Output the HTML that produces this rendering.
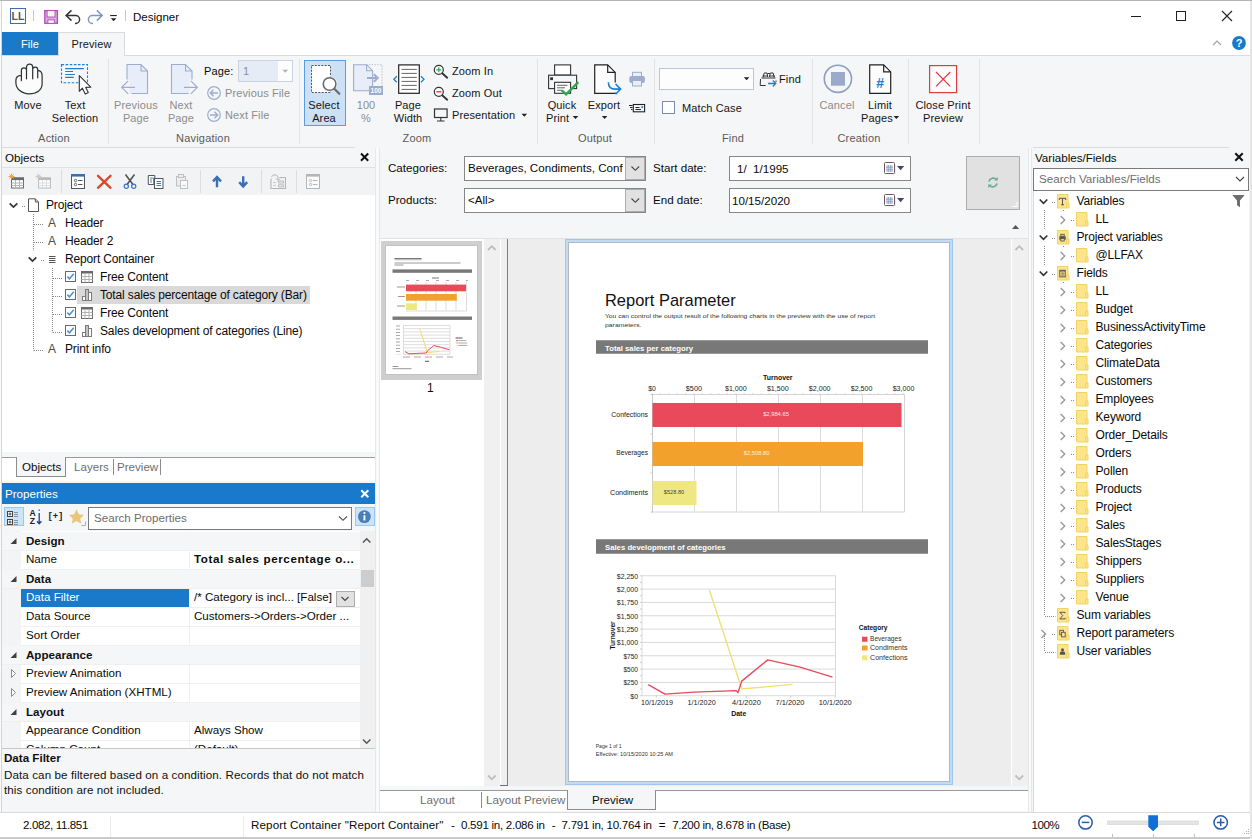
<!DOCTYPE html>
<html lang="en">
<head>
<meta charset="utf-8">
<title>Designer</title>
<style>
*{box-sizing:border-box;margin:0;padding:0}
html,body{width:1252px;height:839px;overflow:hidden;background:#fff}
body{position:relative;font-family:"Liberation Sans",sans-serif;font-size:12px;color:#0a0a0a;line-height:1}
.abs{position:absolute}
.t{position:absolute;white-space:nowrap;line-height:14px;height:14px}
.cx{transform:translateX(-50%)}
svg{position:absolute;overflow:visible}
/* edges */
#edgeL{left:0;top:0;width:2px;height:839px;background:linear-gradient(to right,#fbfbfb 0,#fbfbfb 1px,#d4d4d4 1px,#d4d4d4 2px)}
/* title bar */
#title{left:2px;top:1px;width:1250px;height:31px;background:#fff}
/* tabs */
#tabs{left:2px;top:32px;width:1250px;height:24px;background:#fff;border-bottom:1px solid #dadbdc}
#tabFile{left:0;top:0;width:56px;height:23px;background:#1979ca;color:#fff}
#tabPrev{left:56px;top:0;width:67px;height:24px;background:#f5f6f7;border:1px solid #dadbdc;border-bottom:none}
/* ribbon */
#ribbon{left:2px;top:56px;width:1250px;height:92px;background:#f5f6f7}
.sep{position:absolute;top:3px;width:1px;height:85px;background:#e2e3e4}
.rl{color:#151515;font-size:11px;letter-spacing:.12px}
.rd{color:#8d8d8d;font-size:11px;letter-spacing:.12px}
.rg{color:#5b5b5b;font-size:11px;letter-spacing:.2px}
/* panels */
#left{left:2px;top:147px;width:373px;height:665px;background:#f5f6f7}
#center{left:380px;top:147px;width:648px;height:665px;background:#f5f6f7}
#right{left:1032px;top:147px;width:220px;height:665px;background:#f5f6f7}
.splitv{background:#f9fafb;border-left:1px solid #e6e7e8;border-right:1px solid #e6e7e8}
.tree{font-size:12px;color:#0a0a0a;letter-spacing:-.15px}
.tree .t{line-height:18px;height:18px}
.g{position:absolute;left:19px;width:339px;height:19px;line-height:18px;white-space:nowrap;border-bottom:1px solid #f0f0f0;color:#0a0a0a}
.g.cat{left:0;width:358px;background:#f5f6f7;padding-left:24px;color:#111}
.g span{position:absolute;left:0;top:0;bottom:1px;width:168px;padding-left:5px;line-height:16px}
.g span.sel{background:#1979ca;color:#fff;bottom:0}
.g i{position:absolute;left:169px;top:0;bottom:1px;line-height:16px;width:170px;padding-left:4px;font-style:normal;overflow:hidden}
.pl{font-size:11.600px;color:#0a0a0a}
.inp{background:#fff;border:1px solid #868686}
.dd{position:absolute;right:0;top:0;width:20px;height:23px;background:#e1e1e1;border:1px solid #adadad}
.st{top:5px;font-size:11.600px;color:#0a0a0a}
/* status */
#status{left:0;top:812px;width:1252px;height:27px;background:#fff;border-top:1px solid #dadbdc}
</style>
</head>
<body>
<div id="edgeL" class="abs"></div>
<div class="abs" style="left:0;top:0;width:1252px;height:1px;background:#b5b5b5"></div>
<div class="abs" style="left:1250px;top:1px;width:2px;height:838px;background:#e6e6e6;z-index:5"></div>

<!-- TITLE BAR -->
<div id="title" class="abs">
  <div class="t" style="left:131px;top:9px;font-size:11.5px;color:#0a0a0a">Designer</div>
</div>

<!-- TAB ROW -->
<div id="tabs" class="abs">
  <div id="tabFile" class="abs"><div class="t rl" style="left:0;width:56px;top:5px;text-align:center;color:#fff">File</div></div>
  <div id="tabPrev" class="abs"><div class="t rl" style="left:0;width:65px;top:4px;text-align:center">Preview</div></div>
</div>

<!-- RIBBON -->
<div id="ribbon" class="abs">
  <div class="sep" style="left:106px"></div><div class="sep" style="left:297px"></div><div class="sep" style="left:535px"></div>
  <div class="sep" style="left:652px"></div><div class="sep" style="left:810px"></div><div class="sep" style="left:906px"></div><div class="sep" style="left:977px"></div>
</div>
<div id="rtext" class="abs" style="left:0;top:0;width:0;height:0">
  <div class="t rl cx" style="left:28px;top:98px">Move</div>
  <div class="t rl cx" style="left:75px;top:98px">Text</div>
  <div class="t rl cx" style="left:75px;top:111px">Selection</div>
  <div class="t rg cx" style="left:54px;top:131px">Action</div>
  <div class="t rd cx" style="left:136px;top:98px">Previous</div>
  <div class="t rd cx" style="left:136px;top:111px">Page</div>
  <div class="t rd cx" style="left:181px;top:98px">Next</div>
  <div class="t rd cx" style="left:181px;top:111px">Page</div>
  <div class="t rl" style="left:204px;top:64px;color:#0a0a0a">Page:</div>
  <div class="abs" style="left:238px;top:60px;width:55px;height:22px;border:1px solid #c9d3e2;background:#e6ecf5"><div class="abs" style="right:0;top:0;width:14px;height:20px;background:#fdfdfe"></div><div class="t rd" style="left:4px;top:3px">1</div></div>
  <div class="t rd" style="left:225px;top:86px">Previous File</div>
  <div class="t rd" style="left:225px;top:108px">Next File</div>
  <div class="t rg cx" style="left:203px;top:131px">Navigation</div>
  <div class="abs" style="left:304px;top:60px;width:42px;height:66px;background:#cce0f6;border:1px solid #5c9ce2"></div>
  <div class="t rl cx" style="left:324px;top:98px">Select</div>
  <div class="t rl cx" style="left:324px;top:111px">Area</div>
  <div class="t rd cx" style="left:366px;top:98px">100</div>
  <div class="t rd cx" style="left:366px;top:111px">%</div>
  <div class="t rl cx" style="left:408px;top:98px">Page</div>
  <div class="t rl cx" style="left:408px;top:111px">Width</div>
  <div class="t rl" style="left:452px;top:64px">Zoom In</div>
  <div class="t rl" style="left:452px;top:86px">Zoom Out</div>
  <div class="t rl" style="left:452px;top:108px">Presentation</div>
  <div class="t rg cx" style="left:417px;top:131px">Zoom</div>
  <div class="t rl cx" style="left:562px;top:98px">Quick</div>
  <div class="t rl" style="left:546px;top:111px">Print</div>
  <div class="t rl cx" style="left:604px;top:98px">Export</div>
  <div class="t rg cx" style="left:595px;top:131px">Output</div>
  <div class="abs" style="left:659px;top:68px;width:95px;height:22px;border:1px solid #b6c6dd;background:#fdfdfe"></div>
  <div class="t rl" style="left:779px;top:72px">Find</div>
  <div class="abs" style="left:662px;top:101px;width:13px;height:13px;border:1px solid #7d8ba8;background:#fff"></div>
  <div class="t rl" style="left:682px;top:101px">Match Case</div>
  <div class="t rg cx" style="left:733px;top:131px">Find</div>
  <div class="t rd cx" style="left:837px;top:98px">Cancel</div>
  <div class="t rl cx" style="left:880px;top:98px">Limit</div>
  <div class="t rl" style="left:861px;top:111px">Pages</div>
  <div class="t rg cx" style="left:859px;top:131px">Creation</div>
  <div class="t rl cx" style="left:943px;top:98px">Close Print</div>
  <div class="t rl cx" style="left:943px;top:111px">Preview</div>
</div>
<svg id="ricons" style="left:0;top:0" width="1252" height="147" viewBox="0 0 1252 147" fill="none">
  <!-- title bar icons -->
  <rect x="10.5" y="8.5" width="15" height="15" fill="#fff" stroke="#3c6eb4" stroke-width="1"/>
  <text x="18" y="20.200" style="font-family:'Liberation Sans',sans-serif;font-size:10.500px;font-weight:700" fill="#555" text-anchor="middle">LL</text>
  <rect x="33" y="10" width="1" height="11" fill="#c8c8c8"/>
  <rect x="44.800" y="10.600" width="12.600" height="12.700" fill="#dda9e1" stroke="#b44ab8" stroke-width="1.300"/>
  <rect x="47.100" y="10.600" width="7.900" height="6.400" fill="#f6f6f6" stroke="#b44ab8" stroke-width=".9"/>
  <rect x="47.900" y="19.900" width="6.400" height="3.400" fill="#fff" stroke="#b44ab8" stroke-width=".9"/>
  <path d="M71.500 10.400 L66.100 15.500 L71.500 20.600 M66.300 15.500 H75.600 a4 4 0 0 1 0 8 H75" stroke="#333" stroke-width="1.500"/>
  <path d="M96.800 10.400 L102.200 15.500 L96.800 20.600 M102 15.500 H92.400 a4 4 0 0 0 0 8 H93" stroke="#7e97c0" stroke-width="1.500"/>
  <rect x="110.200" y="15" width="6.600" height="1.100" fill="#222"/><path d="M110.800 18.200 h5.600 l-2.800 3 z" fill="#222"/>
  <rect x="125" y="10" width="1" height="11" fill="#c8c8c8"/>
  <!-- window controls -->
  <path d="M1131 16.500 h10" stroke="#222" stroke-width="1"/>
  <rect x="1176.5" y="11.500" width="9" height="9" stroke="#222" stroke-width="1"/>
  <path d="M1222 11 l10 10 M1232 11 l-10 10" stroke="#222" stroke-width="1.1"/>
  <path d="M1213 45 l4 -4 l4 4" stroke="#a0a0a0" stroke-width="1.1"/>
  <circle cx="1239" cy="43" r="6.900" fill="#1979ca"/>
  <text x="1239" y="47" font-family="Liberation Sans, sans-serif" font-size="11" font-weight="700" fill="#fff" text-anchor="middle">?</text>
  <!-- Move hand -->
  <path d="M21.400 75.300 V70.300 a2.550 2.550 0 0 1 5.100 0 V67.200 a3.100 3.100 0 0 1 6.200 0 V69.500 a2.500 2.500 0 0 1 5 0 V70.300 C40.500 70.500 42.100 72.500 42.100 75.500 V84 C42.100 90 36.600 93.800 29.100 93.800 C21.600 93.800 15.900 88.800 15.900 82.800 V80.300 C15.900 77.300 18.300 75.400 21.400 75.300 Z" fill="#fcfcfc"/>
  <path d="M21.400 80.600 V70.300 a2.550 2.550 0 0 1 5.100 0 M26.500 78.800 V67.200 a3.100 3.100 0 0 1 6.200 0 V78.800 M32.700 69.500 a2.500 2.500 0 0 1 5 0 V77.800 M37.700 70.300 C40.500 70.500 42.100 72.500 42.100 75.500 V84 C42.100 90 36.600 93.800 29.100 93.800 C21.600 93.800 15.900 88.800 15.900 82.800 V80.300 C15.900 77.300 18.300 75.400 21.400 75.300" stroke="#333" stroke-width="1.250" stroke-linecap="round" stroke-linejoin="round"/>
  <!-- Text selection -->
  <rect x="61.500" y="64.600" width="26" height="18.200" stroke="#1e80d2" stroke-width="1.100" stroke-dasharray="2.600 1.500"/>
  <path d="M65.200 68.600 H83.800 M65.200 71.500 H73 M65.200 74.500 H74.900 M65.200 77.400 H73.800" stroke="#1e80d2" stroke-width="1.100"/>
  <path d="M79.300 75.700 V91.300 l3.100 -3.100 l2.900 5.700 l3 -1.500 l-2.600 -5 l5.100 -.3 Z" fill="#fff" stroke="#333" stroke-width="1.100" stroke-linejoin="round"/>
  <!-- Previous page (disabled) -->
  <path d="M127 64.500 h14 l6.500 6.500 v22.500 h-20.500 z" fill="#e8eef9"/>
  <path d="M119 80 h10.500 v14.500 h-10.500 z" fill="#f5f6f7"/>
  <path d="M127 79.500 v-15 h14 l6.500 6.500 v22.500 h-16" stroke="#9dadcd" stroke-width="1.100"/>
  <path d="M141 64.500 v6.500 h6.500" stroke="#9dadcd" stroke-width="1.100"/>
  <path d="M135 87.300 h-13.300 M128.200 80.800 l-6.500 6.500 l6.500 6.500" stroke="#9dadcd" stroke-width="1.200"/>
  <!-- Next page (disabled) -->
  <path d="M171.500 64.500 h14 l6.500 6.500 v22.500 h-20.500 z" fill="#e8eef9"/>
  <path d="M189.500 80 h9 v14.500 h-9 z" fill="#f5f6f7"/>
  <path d="M188.500 93.500 h-17 v-29 h14 l6.500 6.500 v8.500" stroke="#9dadcd" stroke-width="1.100"/>
  <path d="M185.500 64.500 v6.500 h6.500" stroke="#9dadcd" stroke-width="1.100"/>
  <path d="M184 87.300 h13.300 M190.800 80.800 l6.500 6.500 l-6.500 6.500" stroke="#9dadcd" stroke-width="1.200"/>
  <path d="M282.500 69.800 h5.600 l-2.800 3 z" fill="#b0b0b0"/>
  <!-- prev / next file -->
  <circle cx="214" cy="93" r="6.300" stroke="#9dadcd" stroke-width="1.200"/>
  <path d="M218 93 h-7.500 M213.500 89.800 l-3.200 3.200 l3.200 3.200" stroke="#9dadcd" stroke-width="1.400"/>
  <circle cx="214" cy="115" r="6.300" stroke="#9dadcd" stroke-width="1.200"/>
  <path d="M210 115 h7.500 M214.500 111.800 l3.200 3.200 l-3.200 3.200" stroke="#9dadcd" stroke-width="1.400"/>
  <!-- Select area -->
  <rect x="311.500" y="65.500" width="19" height="27" fill="#fff" stroke="#555" stroke-width="1" stroke-dasharray="2 1.300"/>
  <circle cx="329.600" cy="84" r="7.800" fill="#e4eefb"/>
  <circle cx="329.600" cy="84" r="6.300" fill="#fff" stroke="#6a6a6a" stroke-width="1.500"/>
  <path d="M334.300 88.800 l5 5" stroke="#6a6a6a" stroke-width="2.200" stroke-linecap="round"/>
  <!-- 100% (disabled) -->
  <path d="M366 64.700 h16 v22" stroke="#b5c2dc" stroke-width="1" stroke-dasharray="1.500 1.300"/>
  <path d="M353.600 64.700 h13 l6 6 v20 h-19 z" fill="#e8eef9" stroke="#9dadcd" stroke-width="1.100"/>
  <path d="M366.600 64.700 v6 h6" stroke="#9dadcd" stroke-width="1.100"/>
  <path d="M367 78 h9 M373.800 74.300 l4 3.700 l-4 3.700" stroke="#9dadcd" stroke-width="2"/>
  <rect x="369" y="86" width="14" height="9" fill="#9dadcd"/>
  <text x="376" y="93.200" font-family="Liberation Sans, sans-serif" font-size="6.500" font-weight="700" fill="#fff" text-anchor="middle">100</text>
  <!-- Page width -->
  <rect x="398.700" y="64.900" width="20.600" height="28.400" fill="#fff" stroke="#222" stroke-width="1.200"/>
  <path d="M401.500 69.400 h15.300 M401.500 73.400 h15.300 M401.500 77.400 h15.300 M401.500 81.400 h15.300 M401.500 85.400 h15.300 M401.500 89.400 h15.300" stroke="#666" stroke-width="1"/>
  <path d="M396.800 76.300 l-3 3 l3 3 M421 76.300 l3 3 l-3 3" stroke="#1e80d2" stroke-width="1.300"/>
  <!-- zoom in -->
  <circle cx="438.800" cy="69.800" r="4.500" fill="#fff" stroke="#333" stroke-width="1.200"/>
  <path d="M442.200 73.300 l5 4.400" stroke="#333" stroke-width="1.900" stroke-linecap="round"/>
  <path d="M436.300 69.800 h5 M438.800 67.300 v5" stroke="#2ea84f" stroke-width="1.200"/>
  <!-- zoom out -->
  <circle cx="438.800" cy="91.800" r="4.500" fill="#fff" stroke="#333" stroke-width="1.200"/>
  <path d="M442.200 95.300 l5 4.400" stroke="#333" stroke-width="1.900" stroke-linecap="round"/>
  <path d="M436.300 91.800 h5" stroke="#e03030" stroke-width="1.300"/>
  <!-- presentation -->
  <rect x="434.500" y="109" width="12.600" height="8.500" stroke="#333" stroke-width="1.200"/>
  <path d="M440.800 117.500 v3.500 M437 121 h7.500" stroke="#333" stroke-width="1.100"/>
  <path d="M521.500 113.800 h5.600 l-2.800 3 z" fill="#222"/>
  <!-- quick print -->
  <rect x="554.600" y="64.900" width="16" height="10.200" fill="#fff" stroke="#333" stroke-width="1.100"/>
  <rect x="548.600" y="75.200" width="28" height="13.400" fill="#f5f6f7" stroke="#333" stroke-width="1.100"/>
  <rect x="550.200" y="77.300" width="2.800" height="2.800" fill="#333"/>
  <rect x="554.600" y="82.300" width="16" height="11" fill="#fff" stroke="#333" stroke-width="1.100"/>
  <path d="M557 85.300 h10.500 M557 87.800 h8 M557 90.300 h5" stroke="#555" stroke-width=".9"/>
  <path d="M561.800 90.300 l4.300 4 l12.200 -12.200" stroke="#2ea84f" stroke-width="2.400"/>
  <path d="M572.700 116 h5.600 l-2.800 3 z" fill="#222"/>
  <!-- export -->
  <path d="M594.700 64.900 h13 l7.500 7.500 v20.900 h-20.500 z" fill="#fdfdfd" stroke="#222" stroke-width="1.200"/>
  <path d="M607.700 64.900 v7.500 h7.500" stroke="#222" stroke-width="1.200"/>
  <path d="M613.500 82.500 h8 v10 h-8z" fill="#f5f6f7" stroke="none"/>
  <path d="M608.400 82.300 c0 4.600 2.600 6.800 6.800 6.800 h5.200 M615.600 84 l5 5.100 l-5 5.100" stroke="#1e80d2" stroke-width="1.600"/>
  <path d="M601.800 116 h5.600 l-2.800 3 z" fill="#222"/>
  <!-- small printer disabled -->
  <rect x="632.500" y="72.300" width="9" height="4.500" fill="#e8eef9" stroke="#9dadcd" stroke-width="1"/>
  <rect x="629.300" y="76" width="15.600" height="7" rx="2" fill="#9dadcd"/>
  <rect x="632.500" y="80.500" width="9" height="5.500" fill="#e8eef9" stroke="#9dadcd" stroke-width="1"/>
  <!-- envelope / mail -->
  <rect x="633.300" y="104.500" width="11.300" height="7.300" stroke="#222" stroke-width="1.100"/>
  <path d="M629 105.500 h3.500 M630 107.500 h2.500 M631 109.500 h1.500 M635.500 107.500 h4 M635.500 109.500 h5.500" stroke="#222" stroke-width="1"/>
  <rect x="641.300" y="106.200" width="1.800" height="1.800" fill="#1e80d2"/>
  <!-- find combo arrow -->
  <path d="M743.800 77.300 h5.600 l-2.800 3 z" fill="#222"/>
  <!-- binoculars -->
  <path d="M763 77.500 l1.200 -4.500 h2.800 l.8 4 M769.500 77 l.8 -4 h2.800 l1.200 4.500 M761.500 78 h14 M760.500 79 l-.3 6.500 h5.500 M762.500 76 h5.500 M769.500 76 h5.500 M767.500 73.500 h2.500" stroke="#333" stroke-width="1"/>
  <path d="M776 80.500 v1.500" stroke="#333" stroke-width="1"/>
  <path d="M768 83.500 h7.500 M772.800 80.500 l3 3 l-3 3" stroke="#1e80d2" stroke-width="1.300"/>
  <!-- cancel -->
  <circle cx="837.900" cy="78.800" r="13.600" stroke="#8f9fc2" stroke-width="1.600"/>
  <rect x="831" y="72" width="14" height="13.700" fill="#9baacb"/>
  <!-- limit pages -->
  <path d="M869.700 64.900 h14 l7 7 v21.400 h-21 z" fill="#fdfdfd" stroke="#222" stroke-width="1.200"/>
  <path d="M883.700 64.900 v7 h7" stroke="#222" stroke-width="1.200"/>
  <text x="880.200" y="88" font-family="Liberation Sans, sans-serif" font-size="14" font-weight="700" fill="#1e80d2" text-anchor="middle">#</text>
  <path d="M893.600 116 h5.600 l-2.800 3 z" fill="#222"/>
  <!-- close print preview -->
  <rect x="929.600" y="65.600" width="27" height="27" fill="#fdfdfd" stroke="#e23a44" stroke-width="1.200"/>
  <path d="M936 72 l14.300 14.300 M950.300 72 l-14.300 14.300" stroke="#e23a44" stroke-width="1.200"/>
</svg>

<!-- LEFT PANEL -->
<div id="left" class="abs">
  <!-- Objects header -->
  <div class="abs" style="left:0;top:0;width:353px;height:1px;background:#dadbdc"></div>
  <div class="abs" style="left:0;top:20px;width:373px;height:1px;background:#e1e2e3"></div>
  <div class="abs" style="left:0;top:21px;width:373px;height:27px;background:#f2f3f4"></div>
  <div class="t" style="left:3px;top:4px;font-size:11.600px;color:#0a0a0a">Objects</div>
  <!-- tree -->
  <div class="abs" style="left:0;top:48px;width:373px;height:257px;background:#fff"></div>
  <div class="abs" style="left:75px;top:139px;width:233px;height:18px;background:#d9d9d9"></div>
  <div class="tree abs" style="left:0;top:49px">
    <div class="t" style="left:44px;top:0">Project</div>
    <div class="t" style="left:63px;top:18px">Header</div>
    <div class="t" style="left:63px;top:36px">Header 2</div>
    <div class="t" style="left:63px;top:54px">Report Container</div>
    <div class="t" style="left:98px;top:72px">Free Content</div>
    <div class="t" style="left:98px;top:90px">Total sales percentage of category (Bar)</div>
    <div class="t" style="left:98px;top:108px">Free Content</div>
    <div class="t" style="left:98px;top:126px">Sales development of categories (Line)</div>
    <div class="t" style="left:63px;top:144px">Print info</div>
    <div class="t" style="left:46px;top:18px;color:#4a4a4a;font-size:12px">A</div>
    <div class="t" style="left:46px;top:36px;color:#4a4a4a;font-size:12px">A</div>
    <div class="t" style="left:46px;top:144px;color:#4a4a4a;font-size:12px">A</div>
  </div>
  <!-- tabs strip -->
  <div class="abs" style="left:0;top:310px;width:373px;height:24px;background:#fff;border-top:1px solid #9a9a9a"></div>
  <div class="abs" style="left:14px;top:310px;width:50px;height:20px;background:#f5f6f7;border:1px solid #8c8c8c;border-top:none"></div>
  <div class="t" style="left:20px;top:313px;font-size:11.600px;color:#0a0a0a">Objects</div>
  <div class="t" style="left:72px;top:313px;font-size:11.600px;color:#6e6e6e">Layers</div>
  <div class="abs" style="left:111px;top:312px;width:1px;height:16px;background:#8c8c8c"></div>
  <div class="t" style="left:115px;top:313px;font-size:11.600px;color:#6e6e6e">Preview</div>
  <div class="abs" style="left:158px;top:312px;width:1px;height:16px;background:#8c8c8c"></div>
  <!-- Properties header -->
  <div class="abs" style="left:0;top:336px;width:373px;height:21px;background:#1979ca"></div>
  <div class="t" style="left:3px;top:340px;font-size:11.600px;color:#fff">Properties</div>
  <!-- properties toolbar -->
  <div class="abs" style="left:2px;top:360px;width:20px;height:19px;background:#cce4f7;border:1px solid #99c9ef"></div>
  <div class="abs" style="left:86px;top:360px;width:264px;height:23px;background:#fff;border:1px solid #7a7a7a"></div>
  <div class="t" style="left:92px;top:364px;font-size:11.600px;color:#6d6d6d">Search Properties</div>
  <div class="abs" style="left:353px;top:360px;width:20px;height:19px;background:#cce4f7;border:1px solid #99c9ef"></div>
  <!-- grid -->
  <div id="grid" class="abs" style="left:0;top:384px;width:358px;height:217px;background:#fff;overflow:hidden;font-size:11.600px">
    <div class="abs" style="left:0;top:0;width:19px;height:217px;background:#f3f4f5"></div>
    <div class="abs" style="left:187px;top:0;width:1px;height:217px;background:#f0f0f0"></div>
    <div class="g cat" style="top:1px"><b>Design</b></div>
    <div class="g" style="top:20px"><span>Name</span><i><b style="letter-spacing:.6px">Total sales percentage o...</b></i></div>
    <div class="g cat" style="top:39px"><b>Data</b></div>
    <div class="g" style="top:58px"><span class="sel">Data Filter</span><i>/* Category is incl... [False]</i></div>
    <div class="g" style="top:77px"><span>Data Source</span><i>Customers-&gt;Orders-&gt;Order ...</i></div>
    <div class="g" style="top:96px"><span>Sort Order</span><i></i></div>
    <div class="g cat" style="top:115px"><b>Appearance</b></div>
    <div class="g" style="top:134px"><span>Preview Animation</span><i></i></div>
    <div class="g" style="top:153px"><span>Preview Animation (XHTML)</span><i></i></div>
    <div class="g cat" style="top:172px"><b>Layout</b></div>
    <div class="g" style="top:191px"><span>Appearance Condition</span><i>Always Show</i></div>
    <div class="g" style="top:210px"><span>Column Count</span><i>(Default)</i></div>
    <div class="abs" style="left:334px;top:60px;width:19px;height:16px;background:#e1e1e1;border:1px solid #adadad"></div>
  </div>
  <!-- grid scrollbar -->
  <div class="abs" style="left:358px;top:384px;width:15px;height:217px;background:#f0f0f0"></div>
  <div class="abs" style="left:359px;top:423px;width:13px;height:17px;background:#cdcdcd"></div>
  <!-- description -->
  <div class="abs" style="left:0;top:601px;width:373px;height:1px;background:#c8c8c8"></div>
  <div class="t" style="left:2px;top:604px;font-size:11.600px;font-weight:700;color:#111">Data Filter</div>
  <div class="t" style="left:2px;top:621px;font-size:11.600px;color:#111;letter-spacing:.1px">Data can be filtered based on a condition. Records that do not match</div>
  <div class="t" style="left:2px;top:636px;font-size:11.600px;color:#111;letter-spacing:.1px">this condition are not included.</div>
</div>
<div class="abs splitv" style="left:375px;top:148px;width:5px;height:664px"></div>

<svg id="licons" style="left:0;top:0" width="380" height="839" viewBox="0 0 380 839" fill="none">
<path d="M361 153.500 l7.200 7.200 M368.200 153.500 l-7.200 7.200" stroke="#111" stroke-width="2"/>
<rect x="11.5" y="178.0" width="12" height="10" fill="#fff" stroke="#6a6a6a" stroke-width="1"/><rect x="11" y="177.5" width="13" height="2.600" fill="#6a6a6a"/><path d="M15.5 180.0 v8 M19.5 180.0 v8 M11.5 183.0 h12 M11.5 185.5 h12" stroke="#b4b4b4" stroke-width="1"/><path d="M11.5 173.5 v6 M8.5 176.5 h6 M9.4 174.4 l4.200 4.200 M13.6 174.4 l-4.200 4.200" stroke="#f0a030" stroke-width=".9"/>
<rect x="38.5" y="178.0" width="12" height="10" fill="#fff" stroke="#b9b9b9" stroke-width="1"/><rect x="38" y="177.5" width="13" height="2.600" fill="#b9b9b9"/><path d="M42.5 180.0 v8 M46.5 180.0 v8 M38.5 183.0 h12 M38.5 185.5 h12" stroke="#dcdcdc" stroke-width="1"/><path d="M38.5 173.5 v6 M35.5 176.5 h6 M36.4 174.4 l4.200 4.200 M40.6 174.4 l-4.200 4.200" stroke="#c9c9c9" stroke-width=".9"/>
<rect x="61" y="170" width="1" height="23" fill="#dcdddf"/>
<rect x="71.500" y="174.500" width="13" height="14" fill="#fff" stroke="#555" stroke-width="1"/><rect x="71" y="174" width="14" height="2.600" fill="#3a6fb5"/><circle cx="75.500" cy="180.500" r="1.200" stroke="#555" stroke-width=".9"/><circle cx="75.500" cy="184.500" r="1.200" stroke="#555" stroke-width=".9"/><path d="M78 180.500 h4.500 M78 184.500 h4.500" stroke="#555" stroke-width="1"/>
<path d="M98 175.800 l12.500 12 M110.500 175.800 l-12.500 12" stroke="#d8482c" stroke-width="2.300" stroke-linecap="round"/>
<path d="M125.500 174.500 l7.800 10.500 M134.500 174.500 l-7.800 10.500" stroke="#555" stroke-width="1.600"/><circle cx="126.300" cy="186.300" r="2.100" stroke="#3a78c8" stroke-width="1.200"/><circle cx="133.700" cy="186.300" r="2.100" stroke="#3a78c8" stroke-width="1.200"/>
<path d="M148.300 175.500 h6.500 v2.500 h-1 v6.500 h-5.500 z" fill="#fff" stroke="#555" stroke-width="1"/><path d="M150 178 h3 M150 180 h2 M150 182 h2" stroke="#3a78c8" stroke-width=".9"/><rect x="154.500" y="178.500" width="8.500" height="10" fill="#fff" stroke="#555" stroke-width="1"/><path d="M156.500 181.500 h4.500 M156.500 183.500 h4.500 M156.500 185.500 h4.500" stroke="#3a78c8" stroke-width="1"/>
<rect x="176.500" y="176.500" width="9" height="9.500" fill="#ececec" stroke="#c0c0c0"/><rect x="178.500" y="174.500" width="5" height="3" fill="#ececec" stroke="#c0c0c0"/><rect x="180.500" y="180.500" width="7" height="8" fill="#fafafa" stroke="#c0c0c0"/><path d="M182.500 185.500 h3" stroke="#c0c0c0"/>
<rect x="200" y="170" width="1" height="23" fill="#dcdddf"/>
<path d="M217 187.200 v-9.500 M213 181.300 l4 -4.200 l4 4.200" stroke="#3a6fb5" stroke-width="2.400"/>
<path d="M243.200 176.300 v9.500 M239.200 182.200 l4 4.200 l4 -4.200" stroke="#3a6fb5" stroke-width="2.400"/>
<rect x="261" y="170" width="1" height="23" fill="#dcdddf"/>
<path d="M271 178.500 v10 h14.500 v-11 h-6" stroke="#b5b5b5" stroke-width="1.100"/><path d="M271.500 177 a3.500 3.500 0 0 1 6.500 0 v3 M276 178.500 l2 2 l2 -2" stroke="#b5b5b5" stroke-width="1"/><path d="M273.500 182.500 h2 M273.500 185.500 h2 M278.500 181 h5 v2 h-5z M278.500 184.800 h5 v2 h-5z" stroke="#b5b5b5" stroke-width=".9"/>
<rect x="296" y="170" width="1" height="23" fill="#dcdddf"/>
<rect x="306.500" y="174.500" width="13" height="14" fill="#fbfbfb" stroke="#b5b5b5" stroke-width="1"/><rect x="306" y="174" width="14" height="2.600" fill="#b5b5b5"/><circle cx="310.500" cy="180.500" r="1.200" stroke="#b5b5b5" stroke-width=".9"/><circle cx="310.500" cy="184.500" r="1.200" stroke="#b5b5b5" stroke-width=".9"/><path d="M313 180.500 h4.500 M313 184.500 h4.500" stroke="#b5b5b5" stroke-width="1"/>
<path d="M33.500 214 v36.500 M33.500 268 v82.500 M52.500 268 v64.500" stroke="#8a8a8a" stroke-width="1" stroke-dasharray="1 1"/>
<path d="M22 206.500 h4 M41 260.500 h4" stroke="#8a8a8a" stroke-width="1" stroke-dasharray="1 1"/>
<path d="M34 224.5 h10" stroke="#8a8a8a" stroke-width="1" stroke-dasharray="1 1"/>
<path d="M34 242.5 h10" stroke="#8a8a8a" stroke-width="1" stroke-dasharray="1 1"/>
<path d="M34 350.5 h10" stroke="#8a8a8a" stroke-width="1" stroke-dasharray="1 1"/>
<path d="M53 278.5 h10" stroke="#8a8a8a" stroke-width="1" stroke-dasharray="1 1"/>
<path d="M53 296.5 h10" stroke="#8a8a8a" stroke-width="1" stroke-dasharray="1 1"/>
<path d="M53 314.5 h10" stroke="#8a8a8a" stroke-width="1" stroke-dasharray="1 1"/>
<path d="M53 332.5 h10" stroke="#8a8a8a" stroke-width="1" stroke-dasharray="1 1"/>
<path d="M9.7 203.3 l3.800 3.800 l3.800 -3.800" stroke="#333" stroke-width="1.7"/>
<path d="M28.7 257.3 l3.800 3.800 l3.800 -3.800" stroke="#333" stroke-width="1.7"/>
<path d="M28.500 198.800 h6.800 l3.200 3.200 v9.500 h-10 z" fill="#fff" stroke="#555" stroke-width="1"/><path d="M35.300 198.800 v3.200 h3.200" stroke="#555" stroke-width="1"/>
<path d="M49 256.500 h6.500 M49 258.500 h6.500 M49 260.500 h6.500 M49 262.500 h6.500" stroke="#555" stroke-width="1"/>
<rect x="65.5" y="271.5" width="10" height="10" fill="#fff" stroke="#6a6a6a" stroke-width="1"/><path d="M67.3 276.6 l2.2 2.200 l4.200 -5" stroke="#4a90d9" stroke-width="1.500"/>
<rect x="81.5" y="271.5" width="11" height="11" fill="#fff" stroke="#6a6a6a" stroke-width="1"/><rect x="81" y="271" width="12" height="2.500" fill="#6a6a6a"/><path d="M85 273.5 v9 M89 273.5 v9 M81.5 276.5 h11 M81.5 279.5 h11" stroke="#b4b4b4" stroke-width="1"/>
<rect x="65.5" y="289.5" width="10" height="10" fill="#fff" stroke="#6a6a6a" stroke-width="1"/><path d="M67.3 294.6 l2.2 2.200 l4.200 -5" stroke="#4a90d9" stroke-width="1.500"/>
<rect x="82.5" y="296.5" width="3" height="4" fill="#fff" stroke="#7a7a7a"/><rect x="85.5" y="289.5" width="3" height="11" fill="#c4c4c4" stroke="#7a7a7a"/><rect x="88.5" y="292.5" width="3" height="8" fill="#fff" stroke="#7a7a7a"/>
<rect x="65.5" y="307.5" width="10" height="10" fill="#fff" stroke="#6a6a6a" stroke-width="1"/><path d="M67.3 312.6 l2.2 2.200 l4.200 -5" stroke="#4a90d9" stroke-width="1.500"/>
<rect x="81.5" y="307.5" width="11" height="11" fill="#fff" stroke="#6a6a6a" stroke-width="1"/><rect x="81" y="307" width="12" height="2.500" fill="#6a6a6a"/><path d="M85 309.5 v9 M89 309.5 v9 M81.5 312.5 h11 M81.5 315.5 h11" stroke="#b4b4b4" stroke-width="1"/>
<rect x="65.5" y="325.5" width="10" height="10" fill="#fff" stroke="#6a6a6a" stroke-width="1"/><path d="M67.3 330.6 l2.2 2.200 l4.200 -5" stroke="#4a90d9" stroke-width="1.500"/>
<rect x="82.5" y="332.5" width="3" height="4" fill="#fff" stroke="#7a7a7a"/><rect x="85.5" y="325.5" width="3" height="11" fill="#c4c4c4" stroke="#7a7a7a"/><rect x="88.5" y="328.5" width="3" height="8" fill="#fff" stroke="#7a7a7a"/>
<path d="M361.300 490.300 l7 7 M368.300 490.300 l-7 7" stroke="#fff" stroke-width="2"/>
<g stroke="#444" stroke-width="1"><rect x="7.500" y="511.500" width="5" height="5" fill="#fff"/><rect x="7.500" y="519.500" width="5" height="5" fill="#fff"/><path d="M8.500 514 h3 M10 512.500 v3 M8.500 522 h3 M10 520.500 v3"/><path d="M14.500 512.500 h4 M14.500 514.500 h4 M14.500 516.500 h4 M14.500 520.500 h4 M14.500 522.500 h4 M14.500 524.500 h4" stroke-dasharray="1 1"/></g>
<path d="M39.200 513 v10.500 M37 521.300 l2.200 2.500 l2.200 -2.500" stroke="#1c3f94" stroke-width="1.300"/><path d="M39.200 509.500 v1.200" stroke="#1c3f94" stroke-width="1.300"/>
<path d="M76.500 509.300 l2.300 4.900 l5.300 .7 l-3.900 3.600 l1 5.200 l-4.700 -2.600 l-4.700 2.600 l1 -5.200 l-3.900 -3.600 l5.300 -.7 z" fill="#e9c67c"/>
<path d="M85.500 521.500 v4 h-4" stroke="#b0b0b0" stroke-width="1"/>
<path d="M339 516.300 l4 4 l4 -4" stroke="#444" stroke-width="1.100"/>
<circle cx="364.400" cy="516.600" r="6.400" fill="#4a7ebb"/><rect x="363.500" y="515.300" width="1.900" height="5.200" fill="#fff"/><circle cx="364.450" cy="513" r="1.100" fill="#fff"/>
<path d="M16.500 538 v6 h-6 z" fill="#404040"/>
<path d="M16.500 576 v6 h-6 z" fill="#404040"/>
<path d="M16.500 652 v6 h-6 z" fill="#404040"/>
<path d="M16.500 709 v6 h-6 z" fill="#404040"/>
<path d="M11.500 669.500 l4 4 l-4 4 z" stroke="#8a8a8a" stroke-width="1" fill="#fff"/>
<path d="M11.500 688.500 l4 4 l-4 4 z" stroke="#8a8a8a" stroke-width="1" fill="#fff"/>
<path d="M341.500 597 l3.500 3.500 l3.500 -3.500" stroke="#444" stroke-width="1.100"/>
<path d="M363 542.500 l3.700 -3.700 l3.700 3.700" stroke="#555" stroke-width="1.500"/>
<path d="M363 739.500 l3.700 3.700 l3.700 -3.700" stroke="#555" stroke-width="1.500"/>
</svg>
<div class="t" style="left:29.500px;top:508.500px;font-size:8.500px;font-weight:700;color:#222;line-height:9px;height:9px">A</div>
<div class="t" style="left:29.700px;top:516.500px;font-size:8.500px;font-weight:700;color:#222;line-height:9px;height:9px">Z</div>
<div class="t" style="left:47.500px;top:509.500px;font-family:'Liberation Mono',monospace;font-size:9px;font-weight:700;color:#222;letter-spacing:-.2px">[+]</div>

<!-- CENTER PANEL -->
<div id="center" class="abs">
  <!-- params -->
  <div class="t pl" style="left:8px;top:14px">Categories:</div>
  <div class="t pl" style="left:8px;top:46px">Products:</div>
  <div class="abs inp" style="left:84px;top:9px;width:182px;height:25px"><div class="t pl" style="left:3px;top:4px;width:155px;overflow:hidden">Beverages, Condiments, Confections</div><div class="dd"></div></div>
  <div class="abs inp" style="left:84px;top:41px;width:182px;height:25px"><div class="t pl" style="left:3px;top:4px">&lt;All&gt;</div><div class="dd"></div></div>
  <div class="t pl" style="left:273px;top:14px">Start date:</div>
  <div class="t pl" style="left:273px;top:46px">End date:</div>
  <div class="abs inp" style="left:349px;top:9px;width:182px;height:25px"><div class="t pl" style="left:7px;top:5px;white-space:pre">1/  1/1995</div></div>
  <div class="abs inp" style="left:349px;top:41px;width:182px;height:25px"><div class="t pl" style="left:2px;top:5px">10/15/2020</div></div>
  <div class="abs" style="left:586px;top:9px;width:54px;height:54px;background:#e1e1e1;border:1px solid #adadad"></div>
  <!-- thumbs -->
  <div class="abs" style="left:0;top:91px;width:648px;height:1px;background:#e3e3e3"></div>
  <div class="abs" style="left:0;top:92px;width:128px;height:547px;background:#fff"></div>
  <div class="abs" style="left:1px;top:94px;width:101px;height:139px;background:#cfcfcf"></div>
  <div class="abs" style="left:5px;top:98px;width:93px;height:130px;background:#fff;border:1px solid #c2c2c2"></div>
  <div class="t" style="left:47px;top:234px;font-size:12px;color:#111">1</div>
  <div class="abs" style="left:104px;top:92px;width:16px;height:547px;background:#f0f0f0"></div>
  <div class="abs" style="left:121px;top:92px;width:6px;height:547px;background:#f0f0f0"></div><div class="abs" style="left:127px;top:92px;width:1px;height:547px;background:#808080"></div><div class="abs" style="left:120px;top:638px;width:8px;height:1px;background:#6e6e6e"></div>
  <!-- main preview -->
  <div class="abs" style="left:128px;top:92px;width:503px;height:547px;background:#ededed"></div>
  <div class="abs" style="left:631px;top:92px;width:17px;height:547px;background:#f0f0f0;border-left:1px solid #fff"></div>
  <!-- bottom tabs -->
  <div class="abs" style="left:0;top:643px;width:648px;height:21px;background:#fff;border-top:1px solid #9a9a9a"></div>
  <div class="abs" style="left:187px;top:643px;width:89px;height:20px;background:#f5f6f7;border:1px solid #8c8c8c;border-top:none"></div>
  <div class="t" style="left:40px;top:646px;font-size:11.600px;color:#6e6e6e">Layout</div>
  <div class="abs" style="left:101px;top:645px;width:1px;height:16px;background:#8c8c8c"></div>
  <div class="t" style="left:106px;top:646px;font-size:11.600px;color:#6e6e6e">Layout Preview</div>
  <div class="t" style="left:212px;top:646px;font-size:11.600px;color:#0a0a0a">Preview</div>
</div>
<div class="abs splitv" style="left:1028px;top:148px;width:4px;height:664px"></div>
<svg id="pagesvg" style="left:0;top:0" width="1252" height="839" viewBox="0 0 1252 839" fill="none" font-family="Liberation Sans, sans-serif">
<rect x="565" y="239" width="388" height="546" fill="#9dc7ef"/>
<rect x="566" y="240" width="386" height="544" fill="#c2dcf5"/>
<rect x="568" y="242" width="382" height="540" fill="#b4b8bd"/>
<rect x="569" y="243" width="380" height="538" fill="#fff"/>
<text x="605" y="306" font-size="17" fill="#111" textLength="130.7" lengthAdjust="spacingAndGlyphs">Report Parameter</text>
<text x="605" y="318" font-size="6" fill="#333" textLength="270" lengthAdjust="spacingAndGlyphs">You can control the output result of the following charts in the preview with the use of report</text>
<text x="605" y="326.8" font-size="6" fill="#333" textLength="36.5" lengthAdjust="spacingAndGlyphs">parameters.</text>
<rect x="596" y="340.250" width="332" height="13.500" fill="#787878"/>
<text x="605" y="351" font-size="8" fill="#fff" font-weight="700" textLength="88" lengthAdjust="spacingAndGlyphs">Total sales per category</text>
<text x="777.8" y="380" font-size="7" fill="#111" text-anchor="middle" font-weight="700" textLength="29.5" lengthAdjust="spacingAndGlyphs">Turnover</text>
<text x="652.0" y="390.8" font-size="7" fill="#222" text-anchor="middle" textLength="7.7" lengthAdjust="spacingAndGlyphs">$0</text>
<text x="693.92" y="390.8" font-size="7" fill="#222" text-anchor="middle" textLength="16.2" lengthAdjust="spacingAndGlyphs">$500</text>
<text x="735.84" y="390.8" font-size="7" fill="#222" text-anchor="middle" textLength="21.7" lengthAdjust="spacingAndGlyphs">$1,000</text>
<text x="777.76" y="390.8" font-size="7" fill="#222" text-anchor="middle" textLength="21.7" lengthAdjust="spacingAndGlyphs">$1,500</text>
<text x="819.68" y="390.8" font-size="7" fill="#222" text-anchor="middle" textLength="21.7" lengthAdjust="spacingAndGlyphs">$2,000</text>
<text x="861.6" y="390.8" font-size="7" fill="#222" text-anchor="middle" textLength="21.7" lengthAdjust="spacingAndGlyphs">$2,500</text>
<text x="903.52" y="390.8" font-size="7" fill="#222" text-anchor="middle" textLength="21.7" lengthAdjust="spacingAndGlyphs">$3,000</text>
<path d="M694.5 394.500 V512 M736.5 394.500 V512 M778.5 394.500 V512 M820.5 394.500 V512 M862.5 394.500 V512" stroke="#dcdcdc" stroke-width="1"/>
<path d="M652 394.500 H904.500 V512 H652" stroke="#d4d4d4" stroke-width="1"/>
<path d="M652.500 394 V512.500" stroke="#c8c8c8" stroke-width="1"/>
<path d="M652.00 393 v1.500 M660.38 393 v1.500 M668.77 393 v1.500 M677.15 393 v1.500 M685.54 393 v1.500 M693.92 393 v1.500 M702.30 393 v1.500 M710.69 393 v1.500 M719.07 393 v1.500 M727.46 393 v1.500 M735.84 393 v1.500 M744.22 393 v1.500 M752.61 393 v1.500 M760.99 393 v1.500 M769.38 393 v1.500 M777.76 393 v1.500 M786.14 393 v1.500 M794.53 393 v1.500 M802.91 393 v1.500 M811.30 393 v1.500 M819.68 393 v1.500 M828.06 393 v1.500 M836.45 393 v1.500 M844.83 393 v1.500 M853.22 393 v1.500 M861.60 393 v1.500 M869.98 393 v1.500 M878.37 393 v1.500 M886.75 393 v1.500 M895.14 393 v1.500 M903.52 393 v1.500" stroke="#d0d0d0" stroke-width=".8"/>
<path d="M650.500 394.500 h2 M650.500 434 h2 M650.500 473 h2 M650.500 512 h2" stroke="#c8c8c8" stroke-width="1"/>
<rect x="652.500" y="403" width="249" height="24" fill="#e8495b"/>
<rect x="652.500" y="442" width="210.500" height="24" fill="#f2a22c"/>
<rect x="652.500" y="481" width="44" height="24" fill="#efe882"/>
<text x="648" y="416.7" font-size="7" fill="#222" text-anchor="end" textLength="36.7" lengthAdjust="spacingAndGlyphs">Confections</text>
<text x="648" y="455" font-size="7" fill="#222" text-anchor="end" textLength="31.7" lengthAdjust="spacingAndGlyphs">Beverages</text>
<text x="648" y="494.5" font-size="7" fill="#222" text-anchor="end" textLength="38" lengthAdjust="spacingAndGlyphs">Condiments</text>
<text x="776" y="416" font-size="5.5" fill="#fbe6e8" text-anchor="middle" textLength="25.7" lengthAdjust="spacingAndGlyphs">$2,984.65</text>
<text x="756.6" y="454.8" font-size="5.5" fill="#fdf0dc" text-anchor="middle" textLength="25.7" lengthAdjust="spacingAndGlyphs">$2,508.80</text>
<text x="674" y="494" font-size="5.5" fill="#444" text-anchor="middle" textLength="20.3" lengthAdjust="spacingAndGlyphs">$528.80</text>
<rect x="596" y="539.250" width="332" height="14.500" fill="#787878"/>
<text x="605" y="550" font-size="8" fill="#fff" font-weight="700" textLength="120.5" lengthAdjust="spacingAndGlyphs">Sales development of categories</text>
<path d="M642 695.75 H835.500 M642 682.42 H835.500 M642 669.08 H835.500 M642 655.75 H835.500 M642 642.42 H835.500 M642 629.09 H835.500 M642 615.75 H835.500 M642 602.42 H835.500 M642 589.09 H835.500 M642 575.75 H835.500" stroke="#d9d9d9" stroke-width="1"/>
<path d="M642 575.750 V695.750 M835.500 575.750 V695.750" stroke="#d9d9d9" stroke-width="1"/>
<path d="M640 695.75 h2 M640 689.08 h2 M640 682.42 h2 M640 675.75 h2 M640 669.08 h2 M640 662.42 h2 M640 655.75 h2 M640 649.08 h2 M640 642.42 h2 M640 635.75 h2 M640 629.08 h2 M640 622.42 h2 M640 615.75 h2 M640 609.08 h2 M640 602.42 h2 M640 595.75 h2 M640 589.08 h2 M640 582.42 h2 M640 575.75 h2 M656.25 695.750 v2 M701.75 695.750 v2 M746.25 695.750 v2 M790.75 695.750 v2 M835.25 695.750 v2" stroke="#c4c4c4" stroke-width=".8"/>
<text x="638" y="698.75" font-size="7" fill="#222" text-anchor="end" textLength="7.7" lengthAdjust="spacingAndGlyphs">$0</text>
<text x="638" y="685.42" font-size="7" fill="#222" text-anchor="end" textLength="14.5" lengthAdjust="spacingAndGlyphs">$250</text>
<text x="638" y="672.08" font-size="7" fill="#222" text-anchor="end" textLength="14.5" lengthAdjust="spacingAndGlyphs">$500</text>
<text x="638" y="658.75" font-size="7" fill="#222" text-anchor="end" textLength="14.5" lengthAdjust="spacingAndGlyphs">$750</text>
<text x="638" y="645.42" font-size="7" fill="#222" text-anchor="end" textLength="21.2" lengthAdjust="spacingAndGlyphs">$1,000</text>
<text x="638" y="632.09" font-size="7" fill="#222" text-anchor="end" textLength="21.2" lengthAdjust="spacingAndGlyphs">$1,250</text>
<text x="638" y="618.75" font-size="7" fill="#222" text-anchor="end" textLength="21.2" lengthAdjust="spacingAndGlyphs">$1,500</text>
<text x="638" y="605.42" font-size="7" fill="#222" text-anchor="end" textLength="21.2" lengthAdjust="spacingAndGlyphs">$1,750</text>
<text x="638" y="592.09" font-size="7" fill="#222" text-anchor="end" textLength="21.2" lengthAdjust="spacingAndGlyphs">$2,000</text>
<text x="638" y="578.75" font-size="7" fill="#222" text-anchor="end" textLength="21.2" lengthAdjust="spacingAndGlyphs">$2,250</text>
<text x="656.9" y="705" font-size="7" fill="#222" text-anchor="middle" textLength="32" lengthAdjust="spacingAndGlyphs">10/1/2019</text>
<text x="701.6" y="705" font-size="7" fill="#222" text-anchor="middle" textLength="28.2" lengthAdjust="spacingAndGlyphs">1/1/2020</text>
<text x="746.4" y="705" font-size="7" fill="#222" text-anchor="middle" textLength="28.7" lengthAdjust="spacingAndGlyphs">4/1/2020</text>
<text x="790" y="705" font-size="7" fill="#222" text-anchor="middle" textLength="29" lengthAdjust="spacingAndGlyphs">7/1/2020</text>
<text x="835.25" y="705" font-size="7" fill="#222" text-anchor="middle" textLength="33" lengthAdjust="spacingAndGlyphs">10/1/2020</text>
<text x="738.75" y="715.7" font-size="7" fill="#111" text-anchor="middle" font-weight="700" textLength="15" lengthAdjust="spacingAndGlyphs">Date</text>
<text x="0" y="0" font-size="7" font-weight="700" fill="#111" text-anchor="middle" textLength="28.200" lengthAdjust="spacingAndGlyphs" transform="translate(615.300 635.400) rotate(-90)">Turnover</text>
<path d="M709.250 589.600 L741.750 688.900 L792.500 684.400" stroke="#efe070" stroke-width="1.400" stroke-linejoin="round"/>
<path d="M648.250 684.650 L665 694.150 L693.750 692.150 L736.250 690.650 L738 692.650 L741.750 681.150 L767.750 659.900 L800 667.150 L832.500 677.150" stroke="#e8495b" stroke-width="1.400" stroke-linejoin="round"/>
<text x="858.75" y="630" font-size="7" fill="#111" font-weight="700" textLength="28.7" lengthAdjust="spacingAndGlyphs">Category</text>
<rect x="862" y="636.750" width="5.500" height="5" fill="#e8495b"/><rect x="862" y="645.500" width="5.500" height="5" fill="#f2a22c"/><rect x="862" y="655.250" width="5.500" height="5" fill="#efe882"/>
<text x="870" y="641.2" font-size="6.5" fill="#333" textLength="31.5" lengthAdjust="spacingAndGlyphs">Beverages</text>
<text x="870" y="650" font-size="6.5" fill="#333" textLength="37.5" lengthAdjust="spacingAndGlyphs">Condiments</text>
<text x="870" y="660" font-size="6.5" fill="#333" textLength="37.5" lengthAdjust="spacingAndGlyphs">Confections</text>
<text x="595.7" y="747.5" font-size="5.5" fill="#333" textLength="26" lengthAdjust="spacingAndGlyphs">Page 1 of 1</text>
<text x="595.7" y="756" font-size="5.5" fill="#333" textLength="77.3" lengthAdjust="spacingAndGlyphs">Effective: 10/15/2020 10:25 AM</text>
</svg>

<!-- RIGHT PANEL -->
<div id="right" class="abs">
  <div class="abs" style="left:1px;top:0;width:196px;height:1px;background:#dadbdc"></div>
  <div class="t" style="left:3px;top:4px;font-size:11.600px;color:#0a0a0a">Variables/Fields</div>
  <div class="abs" style="left:1px;top:44px;width:216px;height:621px;background:#fff;border-left:1px solid #d9d9d9"></div>
  <div class="abs" style="left:1px;top:21px;width:216px;height:23px;background:#fff;border:1px solid #7a7a7a"></div>
  <div class="t" style="left:7px;top:25px;font-size:11.600px;color:#6d6d6d">Search Variables/Fields</div>
  <div class="tree abs" style="left:0;top:0">
    <div class="t" style="left:44.5px;top:45px">Variables</div>
    <div class="t" style="left:63.5px;top:63px">LL</div>
    <div class="t" style="left:44.5px;top:81px">Project variables</div>
    <div class="t" style="left:63.5px;top:99px">@LLFAX</div>
    <div class="t" style="left:44.5px;top:117px">Fields</div>
    <div class="t" style="left:63.5px;top:135px">LL</div>
    <div class="t" style="left:63.5px;top:153px">Budget</div>
    <div class="t" style="left:63.5px;top:171px">BusinessActivityTime</div>
    <div class="t" style="left:63.5px;top:189px">Categories</div>
    <div class="t" style="left:63.5px;top:207px">ClimateData</div>
    <div class="t" style="left:63.5px;top:225px">Customers</div>
    <div class="t" style="left:63.5px;top:243px">Employees</div>
    <div class="t" style="left:63.5px;top:261px">Keyword</div>
    <div class="t" style="left:63.5px;top:279px">Order_Details</div>
    <div class="t" style="left:63.5px;top:297px">Orders</div>
    <div class="t" style="left:63.5px;top:315px">Pollen</div>
    <div class="t" style="left:63.5px;top:333px">Products</div>
    <div class="t" style="left:63.5px;top:351px">Project</div>
    <div class="t" style="left:63.5px;top:369px">Sales</div>
    <div class="t" style="left:63.5px;top:387px">SalesStages</div>
    <div class="t" style="left:63.5px;top:405px">Shippers</div>
    <div class="t" style="left:63.5px;top:423px">Suppliers</div>
    <div class="t" style="left:63.5px;top:441px">Venue</div>
    <div class="t" style="left:44.5px;top:459px">Sum variables</div>
    <div class="t" style="left:44.5px;top:477px">Report parameters</div>
    <div class="t" style="left:44.5px;top:495px">User variables</div>
  </div>
</div>
<svg id="vicons" style="left:0;top:0" width="1252" height="839" viewBox="0 0 1252 839" fill="none">
<path d="M1057.5 194.5 h10.500 v8.500 h1 v5 h-11.500 z" fill="#fde58b" stroke="#f2d264" stroke-width="1"/><path d="M1066.5 207.5 v-4.500 h1.500" stroke="#f2d264" stroke-width="1"/>
<path d="M1039.700 199.5 l3.800 3.800 l3.800 -3.800" stroke="#333" stroke-width="1.700"/>
<path d="M1052 202.5 h3.500" stroke="#8a8a8a" stroke-width="1" stroke-dasharray="1 1"/>
<path d="M1059.3 200.0 v-1.700 h6.400 v1.700 M1062.5 198.3 v6.500 M1061.0 204.8 h3" stroke="#555" stroke-width="1"/>
<path d="M1076.5 212.5 h10.500 v8.500 h1 v5 h-11.500 z" fill="#fde58b" stroke="#f2d264" stroke-width="1"/><path d="M1085.5 225.5 v-4.500 h1.500" stroke="#f2d264" stroke-width="1"/>
<path d="M1060.700 216.0 l4 4 l-4 4" stroke="#9a9a9a" stroke-width="1.400"/>
<path d="M1071 220.5 h3" stroke="#8a8a8a" stroke-width="1" stroke-dasharray="1 1"/>
<path d="M1057.5 230.5 h10.500 v8.500 h1 v5 h-11.500 z" fill="#fde58b" stroke="#f2d264" stroke-width="1"/><path d="M1066.5 243.5 v-4.500 h1.500" stroke="#f2d264" stroke-width="1"/>
<path d="M1039.700 235.5 l3.800 3.800 l3.800 -3.800" stroke="#333" stroke-width="1.700"/>
<path d="M1052 238.5 h3.500" stroke="#8a8a8a" stroke-width="1" stroke-dasharray="1 1"/>
<rect x="1060.8" y="234.3" width="3.400" height="2" stroke="#555" stroke-width=".9"/><rect x="1059.3" y="236.3" width="6.400" height="3.400" fill="#555"/><rect x="1060.8" y="238.6" width="3.400" height="2.400" fill="#fde58b" stroke="#555" stroke-width=".9"/>
<path d="M1076.5 248.5 h10.500 v8.500 h1 v5 h-11.500 z" fill="#fde58b" stroke="#f2d264" stroke-width="1"/><path d="M1085.5 261.5 v-4.500 h1.500" stroke="#f2d264" stroke-width="1"/>
<path d="M1060.700 252.0 l4 4 l-4 4" stroke="#9a9a9a" stroke-width="1.400"/>
<path d="M1071 256.5 h3" stroke="#8a8a8a" stroke-width="1" stroke-dasharray="1 1"/>
<path d="M1057.5 266.5 h10.500 v8.500 h1 v5 h-11.500 z" fill="#fde58b" stroke="#f2d264" stroke-width="1"/><path d="M1066.5 279.5 v-4.500 h1.500" stroke="#f2d264" stroke-width="1"/>
<path d="M1039.700 271.5 l3.800 3.800 l3.800 -3.800" stroke="#333" stroke-width="1.700"/>
<path d="M1052 274.5 h3.500" stroke="#8a8a8a" stroke-width="1" stroke-dasharray="1 1"/>
<rect x="1059.8" y="270.3" width="5.400" height="6.600" stroke="#555" stroke-width="1"/><path d="M1059.8 271.0 h5.400 M1061.3 273.1 h2.500 M1061.3 275.0 h2.500" stroke="#555" stroke-width="1"/>
<path d="M1076.5 284.5 h10.500 v8.500 h1 v5 h-11.500 z" fill="#fde58b" stroke="#f2d264" stroke-width="1"/><path d="M1085.5 297.5 v-4.500 h1.500" stroke="#f2d264" stroke-width="1"/>
<path d="M1060.700 288.0 l4 4 l-4 4" stroke="#9a9a9a" stroke-width="1.400"/>
<path d="M1071 292.5 h3" stroke="#8a8a8a" stroke-width="1" stroke-dasharray="1 1"/>
<path d="M1076.5 302.5 h10.500 v8.500 h1 v5 h-11.500 z" fill="#fde58b" stroke="#f2d264" stroke-width="1"/><path d="M1085.5 315.5 v-4.500 h1.500" stroke="#f2d264" stroke-width="1"/>
<path d="M1060.700 306.0 l4 4 l-4 4" stroke="#9a9a9a" stroke-width="1.400"/>
<path d="M1071 310.5 h3" stroke="#8a8a8a" stroke-width="1" stroke-dasharray="1 1"/>
<path d="M1076.5 320.5 h10.500 v8.500 h1 v5 h-11.500 z" fill="#fde58b" stroke="#f2d264" stroke-width="1"/><path d="M1085.5 333.5 v-4.500 h1.500" stroke="#f2d264" stroke-width="1"/>
<path d="M1060.700 324.0 l4 4 l-4 4" stroke="#9a9a9a" stroke-width="1.400"/>
<path d="M1071 328.5 h3" stroke="#8a8a8a" stroke-width="1" stroke-dasharray="1 1"/>
<path d="M1076.5 338.5 h10.500 v8.500 h1 v5 h-11.500 z" fill="#fde58b" stroke="#f2d264" stroke-width="1"/><path d="M1085.5 351.5 v-4.500 h1.500" stroke="#f2d264" stroke-width="1"/>
<path d="M1060.700 342.0 l4 4 l-4 4" stroke="#9a9a9a" stroke-width="1.400"/>
<path d="M1071 346.5 h3" stroke="#8a8a8a" stroke-width="1" stroke-dasharray="1 1"/>
<path d="M1076.5 356.5 h10.500 v8.500 h1 v5 h-11.500 z" fill="#fde58b" stroke="#f2d264" stroke-width="1"/><path d="M1085.5 369.5 v-4.500 h1.500" stroke="#f2d264" stroke-width="1"/>
<path d="M1060.700 360.0 l4 4 l-4 4" stroke="#9a9a9a" stroke-width="1.400"/>
<path d="M1071 364.5 h3" stroke="#8a8a8a" stroke-width="1" stroke-dasharray="1 1"/>
<path d="M1076.5 374.5 h10.500 v8.500 h1 v5 h-11.500 z" fill="#fde58b" stroke="#f2d264" stroke-width="1"/><path d="M1085.5 387.5 v-4.500 h1.500" stroke="#f2d264" stroke-width="1"/>
<path d="M1060.700 378.0 l4 4 l-4 4" stroke="#9a9a9a" stroke-width="1.400"/>
<path d="M1071 382.5 h3" stroke="#8a8a8a" stroke-width="1" stroke-dasharray="1 1"/>
<path d="M1076.5 392.5 h10.500 v8.500 h1 v5 h-11.500 z" fill="#fde58b" stroke="#f2d264" stroke-width="1"/><path d="M1085.5 405.5 v-4.500 h1.500" stroke="#f2d264" stroke-width="1"/>
<path d="M1060.700 396.0 l4 4 l-4 4" stroke="#9a9a9a" stroke-width="1.400"/>
<path d="M1071 400.5 h3" stroke="#8a8a8a" stroke-width="1" stroke-dasharray="1 1"/>
<path d="M1076.5 410.5 h10.500 v8.500 h1 v5 h-11.500 z" fill="#fde58b" stroke="#f2d264" stroke-width="1"/><path d="M1085.5 423.5 v-4.500 h1.500" stroke="#f2d264" stroke-width="1"/>
<path d="M1060.700 414.0 l4 4 l-4 4" stroke="#9a9a9a" stroke-width="1.400"/>
<path d="M1071 418.5 h3" stroke="#8a8a8a" stroke-width="1" stroke-dasharray="1 1"/>
<path d="M1076.5 428.5 h10.500 v8.500 h1 v5 h-11.500 z" fill="#fde58b" stroke="#f2d264" stroke-width="1"/><path d="M1085.5 441.5 v-4.500 h1.500" stroke="#f2d264" stroke-width="1"/>
<path d="M1060.700 432.0 l4 4 l-4 4" stroke="#9a9a9a" stroke-width="1.400"/>
<path d="M1071 436.5 h3" stroke="#8a8a8a" stroke-width="1" stroke-dasharray="1 1"/>
<path d="M1076.5 446.5 h10.500 v8.500 h1 v5 h-11.500 z" fill="#fde58b" stroke="#f2d264" stroke-width="1"/><path d="M1085.5 459.5 v-4.500 h1.500" stroke="#f2d264" stroke-width="1"/>
<path d="M1060.700 450.0 l4 4 l-4 4" stroke="#9a9a9a" stroke-width="1.400"/>
<path d="M1071 454.5 h3" stroke="#8a8a8a" stroke-width="1" stroke-dasharray="1 1"/>
<path d="M1076.5 464.5 h10.500 v8.500 h1 v5 h-11.500 z" fill="#fde58b" stroke="#f2d264" stroke-width="1"/><path d="M1085.5 477.5 v-4.500 h1.500" stroke="#f2d264" stroke-width="1"/>
<path d="M1060.700 468.0 l4 4 l-4 4" stroke="#9a9a9a" stroke-width="1.400"/>
<path d="M1071 472.5 h3" stroke="#8a8a8a" stroke-width="1" stroke-dasharray="1 1"/>
<path d="M1076.5 482.5 h10.500 v8.500 h1 v5 h-11.500 z" fill="#fde58b" stroke="#f2d264" stroke-width="1"/><path d="M1085.5 495.5 v-4.500 h1.500" stroke="#f2d264" stroke-width="1"/>
<path d="M1060.700 486.0 l4 4 l-4 4" stroke="#9a9a9a" stroke-width="1.400"/>
<path d="M1071 490.5 h3" stroke="#8a8a8a" stroke-width="1" stroke-dasharray="1 1"/>
<path d="M1076.5 500.5 h10.500 v8.500 h1 v5 h-11.500 z" fill="#fde58b" stroke="#f2d264" stroke-width="1"/><path d="M1085.5 513.5 v-4.500 h1.500" stroke="#f2d264" stroke-width="1"/>
<path d="M1060.700 504.0 l4 4 l-4 4" stroke="#9a9a9a" stroke-width="1.400"/>
<path d="M1071 508.5 h3" stroke="#8a8a8a" stroke-width="1" stroke-dasharray="1 1"/>
<path d="M1076.5 518.5 h10.500 v8.500 h1 v5 h-11.500 z" fill="#fde58b" stroke="#f2d264" stroke-width="1"/><path d="M1085.5 531.5 v-4.500 h1.500" stroke="#f2d264" stroke-width="1"/>
<path d="M1060.700 522.0 l4 4 l-4 4" stroke="#9a9a9a" stroke-width="1.400"/>
<path d="M1071 526.5 h3" stroke="#8a8a8a" stroke-width="1" stroke-dasharray="1 1"/>
<path d="M1076.5 536.5 h10.500 v8.500 h1 v5 h-11.500 z" fill="#fde58b" stroke="#f2d264" stroke-width="1"/><path d="M1085.5 549.5 v-4.500 h1.500" stroke="#f2d264" stroke-width="1"/>
<path d="M1060.700 540.0 l4 4 l-4 4" stroke="#9a9a9a" stroke-width="1.400"/>
<path d="M1071 544.5 h3" stroke="#8a8a8a" stroke-width="1" stroke-dasharray="1 1"/>
<path d="M1076.5 554.5 h10.500 v8.500 h1 v5 h-11.500 z" fill="#fde58b" stroke="#f2d264" stroke-width="1"/><path d="M1085.5 567.5 v-4.500 h1.500" stroke="#f2d264" stroke-width="1"/>
<path d="M1060.700 558.0 l4 4 l-4 4" stroke="#9a9a9a" stroke-width="1.400"/>
<path d="M1071 562.5 h3" stroke="#8a8a8a" stroke-width="1" stroke-dasharray="1 1"/>
<path d="M1076.5 572.5 h10.500 v8.500 h1 v5 h-11.500 z" fill="#fde58b" stroke="#f2d264" stroke-width="1"/><path d="M1085.5 585.5 v-4.500 h1.500" stroke="#f2d264" stroke-width="1"/>
<path d="M1060.700 576.0 l4 4 l-4 4" stroke="#9a9a9a" stroke-width="1.400"/>
<path d="M1071 580.5 h3" stroke="#8a8a8a" stroke-width="1" stroke-dasharray="1 1"/>
<path d="M1076.5 590.5 h10.500 v8.500 h1 v5 h-11.500 z" fill="#fde58b" stroke="#f2d264" stroke-width="1"/><path d="M1085.5 603.5 v-4.500 h1.500" stroke="#f2d264" stroke-width="1"/>
<path d="M1060.700 594.0 l4 4 l-4 4" stroke="#9a9a9a" stroke-width="1.400"/>
<path d="M1071 598.5 h3" stroke="#8a8a8a" stroke-width="1" stroke-dasharray="1 1"/>
<path d="M1057.5 608.5 h10.500 v8.500 h1 v5 h-11.500 z" fill="#fde58b" stroke="#f2d264" stroke-width="1"/><path d="M1066.5 621.5 v-4.500 h1.500" stroke="#f2d264" stroke-width="1"/>
<path d="M1045 616.5 h10.500" stroke="#8a8a8a" stroke-width="1" stroke-dasharray="1 1"/>
<path d="M1065.1 613.3 v-1 h-5.300 l3 3.300 l-3 3.300 h5.300 v-1" stroke="#555" stroke-width="1"/>
<path d="M1057.5 626.5 h10.500 v8.500 h1 v5 h-11.500 z" fill="#fde58b" stroke="#f2d264" stroke-width="1"/><path d="M1066.5 639.5 v-4.500 h1.500" stroke="#f2d264" stroke-width="1"/>
<path d="M1041.500 630.0 l4 4 l-4 4" stroke="#9a9a9a" stroke-width="1.400"/>
<path d="M1052 634.5 h3.500" stroke="#8a8a8a" stroke-width="1" stroke-dasharray="1 1"/>
<rect x="1059.8" y="630.3" width="3.600" height="4.400" stroke="#555" stroke-width=".9"/><rect x="1061.6" y="632.3" width="3.600" height="4.600" fill="#fde58b" stroke="#555" stroke-width=".9"/>
<path d="M1057.5 644.5 h10.500 v8.500 h1 v5 h-11.500 z" fill="#fde58b" stroke="#f2d264" stroke-width="1"/><path d="M1066.5 657.5 v-4.500 h1.500" stroke="#f2d264" stroke-width="1"/>
<path d="M1045 652.5 h10.500" stroke="#8a8a8a" stroke-width="1" stroke-dasharray="1 1"/>
<circle cx="1062.5" cy="649.8" r="1.500" fill="#555"/><path d="M1059.8999999999999 654.8 v-1.200 a2.600 2.400 0 0 1 5.200 0 v1.200 z" fill="#555"/>
<path d="M1044.500 210 v20 M1044.500 246 v20 M1044.500 282 v334 M1044.500 634 v17" stroke="#8a8a8a" stroke-width="1" stroke-dasharray="1 1"/>
<path d="M1063.500 210 v1 M1063.500 246 v1 M1063.500 282 v1" stroke="#8a8a8a" stroke-width="1" stroke-dasharray="1 1"/>
<path d="M1235.300 153.300 l7.400 7.400 M1242.700 153.300 l-7.400 7.400" stroke="#111" stroke-width="2"/>
<path d="M1236 177 l4 4 l4 -4" stroke="#444" stroke-width="1.100"/>
<path d="M1232.300 195 h12.400 l-4.700 5.500 v6.800 l-3 -2 v-4.800 z" fill="#6e6e6e"/>
</svg>

<!-- STATUS BAR -->
<div id="status" class="abs">
  <div class="t st" style="left:23px;letter-spacing:-.39px">2.082, 11.851</div>
  <div class="abs" style="left:110px;top:3px;width:1px;height:21px;background:#ececec"></div>
  <div class="abs" style="left:243px;top:3px;width:1px;height:21px;background:#ececec"></div>
  <div class="t st" style="left:251px;letter-spacing:0.13px">Report Container &quot;Report Container&quot;</div>
  <div class="t st" style="left:451px;letter-spacing:0px">-</div>
  <div class="t st" style="left:461px;letter-spacing:-0.29px">0.591 in, 2.086 in</div>
  <div class="t st" style="left:551.7px;letter-spacing:0px">-</div>
  <div class="t st" style="left:561.5px;letter-spacing:-0.27px">7.791 in, 10.764 in</div>
  <div class="t st" style="left:658.7px;letter-spacing:0px">=</div>
  <div class="t st" style="left:672.2px;letter-spacing:-0.33px">7.200 in, 8.678 in (Base)</div>
  <div class="t st" style="left:1031.500px;letter-spacing:-.5px">100%</div>
</div>
<div class="abs" style="left:0;top:837px;width:1252px;height:2px;background:#c9c9c9"></div>
<svg id="cicons" style="left:0;top:0" width="1252" height="839" viewBox="0 0 1252 839" fill="none">
<path d="M631.500 166.5 l3.800 3.800 l3.800 -3.800" stroke="#444" stroke-width="1.100"/>
<path d="M631.500 198.5 l3.800 3.800 l3.800 -3.800" stroke="#444" stroke-width="1.100"/>
<rect x="886" y="163.8" width="9.500" height="10.500" rx="1" fill="#c9c9c9" opacity=".6"/>
<rect x="884.500" y="162.5" width="10" height="11" rx="1" fill="#fff" stroke="#6b5a5a" stroke-width="1"/>
<rect x="886" y="165" width="7" height="7" fill="#d4dbe8"/>
<path d="M888.300 165 v7 M890.700 165 v7 M886 167.3 h7 M886 169.7 h7" stroke="#8f9bb5" stroke-width=".8"/>
<path d="M897 166 h7.200 l-3.600 4.200 z" fill="#3a4a78"/>
<rect x="886" y="195.8" width="9.500" height="10.500" rx="1" fill="#c9c9c9" opacity=".6"/>
<rect x="884.500" y="194.5" width="10" height="11" rx="1" fill="#fff" stroke="#6b5a5a" stroke-width="1"/>
<rect x="886" y="197" width="7" height="7" fill="#d4dbe8"/>
<path d="M888.300 197 v7 M890.700 197 v7 M886 199.3 h7 M886 201.7 h7" stroke="#8f9bb5" stroke-width=".8"/>
<path d="M897 198 h7.200 l-3.600 4.200 z" fill="#3a4a78"/>
<path d="M989 181.500 a4.300 4.300 0 0 1 7.500 -1.800 M997 183.500 a4.300 4.300 0 0 1 -7.500 1.800" stroke="#68b092" stroke-width="1.700"/>
<path d="M997.800 177 v3.600 h-3.600 z M988.200 188 v-3.600 h3.600 z" fill="#68b092"/>
<path d="M1017 202 v4.500 h-4.500" stroke="#fff" stroke-width="1"/>
<path d="M1012 229 h7.200 l-3.600 -4 z" fill="#555"/>
<path d="M488 250 l3.800 -3.800 l3.800 3.800" stroke="#bdbdbd" stroke-width="1.800"/>
<path d="M488 775.500 l3.800 3.800 l3.800 -3.800" stroke="#bdbdbd" stroke-width="1.800"/>
<path d="M1015.500 250 l3.800 -3.800 l3.800 3.800" stroke="#bdbdbd" stroke-width="1.800"/>
<path d="M1015.500 775.500 l3.800 3.800 l3.800 -3.800" stroke="#bdbdbd" stroke-width="1.800"/>
<rect x="394.500" y="258" width="27" height="1.300" fill="#777"/><rect x="394.500" y="259.300" width="27" height="1" fill="#bbb"/>
<rect x="394.500" y="262.500" width="66" height="1" fill="#999"/><rect x="394.500" y="264.500" width="9" height="1" fill="#999"/>
<rect x="392.500" y="269.400" width="79.500" height="3.400" fill="#787878"/>
<rect x="432" y="277.500" width="7" height="1" fill="#777"/>
<path d="M406 280.500 h62" stroke="#aaa" stroke-width="1" stroke-dasharray="3 7"/>
<path d="M416 282 v29 M426 282 v29 M436 282 v29 M446 282 v29 M456 282 v29 M466.500 282 v29 M406 311 h60.500" stroke="#ddd" stroke-width="1"/>
<rect x="406" y="284.600" width="60" height="6.700" fill="#e8495b"/>
<rect x="406" y="294" width="50.800" height="6.700" fill="#f2a22c"/>
<rect x="406" y="303.300" width="10.800" height="6.700" fill="#efe882"/>
<rect x="397" y="286.500" width="8" height="1" fill="#999"/><rect x="398" y="296" width="7" height="1" fill="#999"/><rect x="397" y="305.500" width="8" height="1" fill="#999"/>
<rect x="392.500" y="316.500" width="79.500" height="3.400" fill="#787878"/>
<path d="M403.500 325.5 h46.500 M403.500 328.7 h46.500 M403.500 331.9 h46.500 M403.500 335.1 h46.500 M403.500 338.3 h46.500 M403.500 341.5 h46.500 M403.500 344.7 h46.500 M403.500 347.9 h46.500 M403.500 351.1 h46.500 M403.500 354.3 h46.500" stroke="#ddd" stroke-width="1"/><path d="M403.500 325.500 v29 M450 325.500 v29" stroke="#ddd" stroke-width="1"/>
<path d="M398 325.500 v29" stroke="#aaa" stroke-width="4" stroke-dasharray="1 2.200"/>
<path d="M419.700 328.700 L427.500 352.600 L439.700 351.500" stroke="#efe070" stroke-width="1"/>
<path d="M405 351.600 L409 353.900 L416 353.400 L426.200 353 L427.500 350.800 L433.700 345.600 L441.500 347.400 L449.300 349.800" stroke="#e8495b" stroke-width="1"/>
<path d="M403 357 h50" stroke="#aaa" stroke-width="1" stroke-dasharray="7 4"/><rect x="425" y="360.800" width="4" height="1" fill="#555"/>
<rect x="455.500" y="337.500" width="7" height="1" fill="#555"/><rect x="456.300" y="340" width="1.500" height="1.200" fill="#e8495b"/><rect x="456.300" y="342.400" width="1.500" height="1.200" fill="#f2a22c"/><rect x="456.300" y="344.800" width="1.500" height="1.200" fill="#efe882"/>
<rect x="458.300" y="340.100" width="8" height="1" fill="#aaa"/><rect x="458.300" y="342.500" width="9" height="1" fill="#aaa"/><rect x="458.300" y="344.900" width="9" height="1" fill="#aaa"/>
<rect x="392.500" y="366" width="6" height="1" fill="#999"/><rect x="392.500" y="368.200" width="19" height="1" fill="#999"/>
<circle cx="1085.500" cy="822.400" r="6.700" stroke="#2a5da8" stroke-width="1.500"/><path d="M1081.700 822.400 h7.600" stroke="#2a5da8" stroke-width="1.500"/>
<circle cx="1220.700" cy="822.400" r="6.700" stroke="#2a5da8" stroke-width="1.500"/><path d="M1216.900 822.400 h7.600 M1220.700 818.600 v7.600" stroke="#2a5da8" stroke-width="1.500"/>
<rect x="1107.500" y="821" width="91" height="3.600" fill="#e4e4e4" stroke="#d2d2d2" stroke-width=".6"/>
<path d="M1148.300 815.200 h9.700 v11.600 l-4.850 4.500 l-4.850 -4.500 z" fill="#0f6fd6"/>
<path d="M1112.500 834 v3 M1153.500 834 v3 M1194.500 834 v3" stroke="#c0c0c0" stroke-width="1"/>
<path d="M1248.500 829 v1 M1246.500 831 v1 M1248.500 831 v1 M1244.500 833 v1 M1246.500 833 v1 M1248.500 833 v1" stroke="#b4b4b4" stroke-width="1.200"/>
</svg>
</body>
</html>
